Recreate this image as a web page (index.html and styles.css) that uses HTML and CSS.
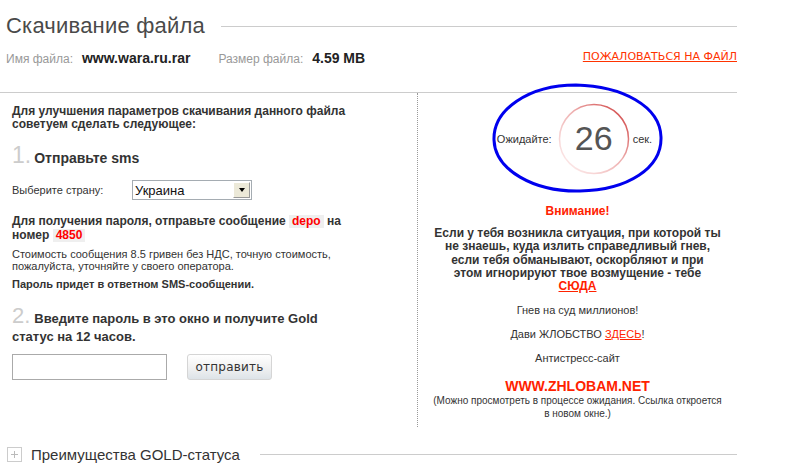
FILE: index.html
```html
<!DOCTYPE html>
<html lang="ru">
<head>
<meta charset="utf-8">
<title>Скачивание файла</title>
<link rel="stylesheet" href="styles.css">
</head>
<body>
<div class="page">
  <div class="title-row">
    <h1 class="title">Скачивание файла</h1>
    <div class="rule"></div>
  </div>
  <div class="meta-row">
    <div class="meta">
      <span class="meta-label">Имя файла:</span>
      <span class="meta-value">www.wara.ru.rar</span>
      <span class="meta-label meta-gap">Размер файла:</span>
      <span class="meta-value">4.59 MB</span>
    </div>
    <a class="complain" href="#">ПОЖАЛОВАТЬСЯ НА ФАЙЛ</a>
  </div>
  <div class="main">
    <div class="left">
      <p class="intro">Для улучшения параметров скачивания данного файла советуем сделать следующее:</p>
      <div class="step"><span class="num">1.</span><span class="step-title">Отправьте sms</span></div>
      <div class="country">
        <span class="country-label">Выберите страну:</span>
        <div class="select"><span class="select-text">Украина</span><span class="select-btn"><span class="tri"></span></span></div>
      </div>
      <p class="sms">Для получения пароля, отправьте сообщение <span class="code">depo</span> на номер <span class="code">4850</span></p>
      <p class="cost">Стоимость сообщения 8.5 гривен без НДС, точную стоимость, пожалуйста, уточняйте у своего оператора.</p>
      <p class="reply">Пароль придет в ответном SMS-сообщении.</p>
      <p class="step2"><span class="num">2.</span>Введите пароль в это окно и получите Gold статус на 12 часов.</p>
      <div class="form">
        <input class="pass" type="text">
        <button class="send" type="button">отправить</button>
      </div>
    </div>
    <div class="right">
      <div class="timer">
        <span class="wait">Ожидайте:</span>
        <div class="ring">
          <svg class="ring-svg" width="72" height="72" viewBox="0 0 72 72">
            <defs>
              <linearGradient id="rg" x1="1" y1="0" x2="0" y2="1">
                <stop offset="0" stop-color="#cc3333"/>
                <stop offset="0.45" stop-color="#eeb0b0"/>
                <stop offset="1" stop-color="#fff6f6"/>
              </linearGradient>
            </defs>
            <circle cx="36" cy="36" r="34.5" fill="none" stroke="url(#rg)" stroke-width="1.5"/>
          </svg>
          <span class="count">26</span>
        </div>
        <span class="sec">сек.</span>
      </div>
      <p class="attention">Внимание!</p>
      <p class="story">Если у тебя возникла ситуация, при которой ты<br>не знаешь, куда излить справедливый гнев,<br>если тебя обманывают, оскорбляют и при<br>этом игнорируют твое возмущение - тебе<br><a class="red-link" href="#">СЮДА</a></p>
      <p class="plain">Гнев на суд миллионов!</p>
      <p class="plain">Дави ЖЛОБСТВО <a class="here" href="#">ЗДЕСЬ</a>!</p>
      <p class="plain">Антистресс-сайт</p>
      <p class="site">WWW.ZHLOBAM.NET</p>
      <p class="note">(Можно просмотреть в процессе ожидания. Ссылка откроется в новом окне.)</p>
      <svg class="scribble" width="176" height="114" viewBox="0 0 176 114">
        <path d="M86 3 C 38 3, 3 28, 4 58 C 5 88, 44 110, 90 109 C 138 108, 172 86, 171 55 C 170 24, 132 4, 86 3 Z" fill="none" stroke="#0000ee" stroke-width="3"/>
      </svg>
    </div>
  </div>
  <div class="gold-row">
    <span class="plus"></span>
    <span class="gold-title">Преимущества GOLD-статуса</span>
    <div class="rule"></div>
  </div>
</div>
</body>
</html>
```
FILE: styles.css
```css
* { box-sizing: border-box; }
html, body { margin: 0; padding: 0; background: #fff; }
body {
  font-family: "Liberation Sans", Arial, sans-serif;
  color: #333;
  width: 796px;
  height: 471px;
  overflow: hidden;
}
p { margin: 0; }
.page { width: 737px; }

.title-row {
  display: flex;
  align-items: center;
  padding: 12px 0 0 6px;
  height: 40px;
}
.title {
  margin: 0;
  font-weight: normal;
  font-size: 22px;
  color: #4a4a4a;
  line-height: 28px;
  letter-spacing: 0.2px;
}
.rule { flex: 1; border-top: 1px solid #cccccc; margin-left: 16px; }

.meta-row {
  display: flex;
  justify-content: space-between;
  align-items: flex-start;
  padding: 10px 0 0 6px;
  height: 53px;
  border-bottom: 1px solid #cccccc;
}
.meta { display: flex; align-items: baseline; }
.meta-label { font-size: 12px; color: #999; margin-right: 9px; }
.meta-gap { margin-left: 28px; }
.meta-value { font-size: 14px; font-weight: bold; color: #222; }
.complain {
  color: #ff3300;
  text-decoration: underline;
  font-family: "DejaVu Sans", sans-serif;
  font-size: 11px;
}

.main {
  display: grid;
  grid-template-columns: 418px 1fr;
  height: 334px;
}
.left {
  border-right: 1px dotted #999;
  padding: 12px 0 0 12px;
  font-size: 11px;
}
.intro {
  font-weight: bold;
  font-size: 12px;
  line-height: 13px;
  width: 340px;
  color: #333;
}
.step {
  display: flex;
  align-items: baseline;
  margin-top: 11px;
  height: 28px;
}
.num {
  font-size: 23px;
  color: #cccccc;
  font-weight: normal;
  margin-right: 3px;
}
.step-title { font-size: 14px; font-weight: bold; color: #333; }
.country {
  display: flex;
  align-items: center;
  margin-top: 10px;
  height: 20px;
}
.country-label { width: 120px; font-size: 11px; color: #333; }
.select {
  display: flex;
  width: 120px;
  height: 20px;
  border: 1px solid #a5acb2;
  background: #fff;
  align-items: center;
  justify-content: space-between;
}
.select-text { font-size: 13px; padding-left: 2px; color: #111; }
.select-btn {
  width: 17px;
  height: 16px;
  margin-right: 1px;
  background: #ece9d8;
  border: 1px solid;
  border-color: #fff #999 #999 #fff;
  display: flex;
  align-items: center;
  justify-content: center;
}
.tri {
  width: 0; height: 0;
  border-left: 3.5px solid transparent;
  border-right: 3.5px solid transparent;
  border-top: 4px solid #000;
}
.sms {
  margin-top: 14px;
  font-weight: bold;
  font-size: 12px;
  line-height: 14px;
  width: 360px;
}
.code {
  display: inline-block;
  line-height: 13px;
  color: #ff0000;
  background: #efefef;
  padding: 0 3px;
}
.cost {
  margin-top: 7px;
  font-size: 11px;
  line-height: 11.5px;
  width: 340px;
  color: #333;
}
.reply { margin-top: 6px; font-weight: bold; font-size: 11px; line-height: 13px; }
.step2 {
  margin-top: 16px;
  font-weight: bold;
  font-size: 13px;
  line-height: 18px;
  width: 330px;
}
.step2 .num { font-size: 22px; line-height: 18px; margin-right: 4px; }
.form { display: flex; align-items: center; margin-top: 8px; }
.pass {
  width: 155px;
  height: 26px;
  border: 1px solid #aaa;
  padding: 0;
  margin: 0;
}
.send {
  margin-left: 20px;
  width: 85px;
  height: 26px;
  border: 1px solid #d5d5d5;
  border-radius: 3px;
  background: linear-gradient(#ffffff, #f2f2f2 50%, #dde3e8);
  font-family: "DejaVu Sans", sans-serif;
  font-size: 12px;
  color: #333;
  padding: 0;
  letter-spacing: 0.2px;
}

.right {
  position: relative;
  display: flex;
  flex-direction: column;
  align-items: center;
  text-align: center;
  font-size: 11px;
  padding-top: 10px;
}
.timer { display: flex; align-items: center; margin-right: 6px; }
.wait { font-size: 11px; margin-right: 6px; }
.ring { position: relative; width: 72px; height: 72px; display: flex; align-items: center; justify-content: center; }
.ring-svg { position: absolute; left: 0; top: 0; }
.count { font-size: 34px; color: #555; position: relative; top: -1px; }
.sec { font-size: 11px; margin-left: 3px; }
.attention { margin-top: 29px; color: #ff2200; font-weight: bold; font-size: 12px; line-height: 14px; }
.story {
  margin-top: 9px;
  font-weight: bold;
  font-size: 12px;
  line-height: 13.3px;
}
.red-link { color: #ff2200; }
.plain { margin-top: 10px; font-size: 11px; line-height: 14px; }
.here { color: #ff2200; }
.site { margin-top: 13px; color: #ff2200; font-weight: bold; font-size: 14px; line-height: 16px; }
.note { font-size: 10px; line-height: 13px; width: 290px; }
.scribble { position: absolute; left: 72px; top: -11px; }

.gold-row {
  display: flex;
  align-items: center;
  padding: 19px 0 0 7px;
}
.plus {
  position: relative;
  width: 15px;
  height: 15px;
  border: 1px solid #ccc;
}
.plus::before, .plus::after {
  content: "";
  position: absolute;
  background: #bbb;
}
.plus::before { left: 3px; right: 3px; top: 6px; height: 1px; }
.plus::after { top: 3px; bottom: 3px; left: 6px; width: 1px; }
.gold-title { font-size: 15px; color: #333; margin-left: 9px; }
.gold-row .rule { margin-left: 20px; }
```
